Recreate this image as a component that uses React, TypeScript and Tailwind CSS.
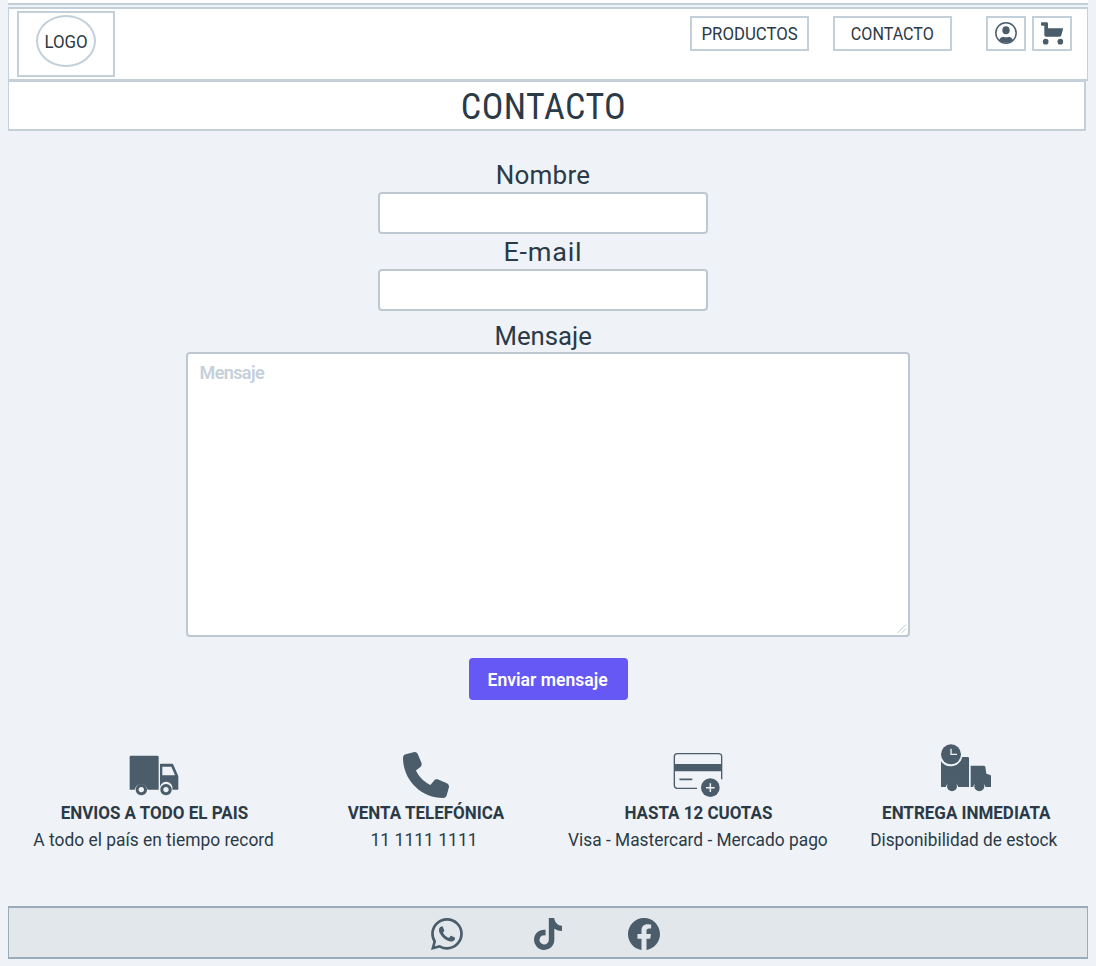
import { BsFacebook, BsWhatsapp } from "react-icons/bs";
import { FaPhone, FaTiktok } from "react-icons/fa6";

function UserIcon() {
  return (
    <svg width="22" height="22" viewBox="0 0 66 66" fill="currentColor" className="-mt-px">
      <circle cx="33" cy="33" r="30.5" fill="none" stroke="currentColor" strokeWidth="4.5" />
      <ellipse cx="33" cy="25" rx="11" ry="12" />
      <path d="M12 54Q16 45 24 44Q33 47 42 44Q50 45 54 54A30 30 0 0 1 12 54Z" />
    </svg>
  );
}

function CartIcon() {
  return (
    <svg width="24" height="24" viewBox="1110 62 72 72" fill="currentColor" className="-mt-px">
      <path d="M1116 66H1130Q1134 66 1134 70V84H1177Q1180 84 1179 87L1174 105Q1173 109 1169 109H1128Q1123 109 1123 104V76H1116Q1113 76 1113 73V69Q1113 66 1116 66Z" />
      <circle cx="1127" cy="124" r="8.5" />
      <circle cx="1171" cy="124" r="8.5" />
    </svg>
  );
}

function TruckIcon() {
  return (
    <svg width="52" height="42" viewBox="325 55 156 126" fill="currentColor">
      <path d="M333 60H413Q417 60 417 64V162H384A20 20 0 0 0 345 162H330V63Q330 60 333 60Z" />
      <path fillRule="evenodd" d="M422 84H457Q460 84 461 87L475 119Q476 121 476 124V160Q476 162 474 162H458A19 19 0 0 0 421 153V85ZM428 93V119H466L455 93Z" />
      <path fillRule="evenodd" d="M365 145a17 17 0 1 0 .1 0ZM365 154a8 8 0 1 1-.1 0Z" />
      <path fillRule="evenodd" d="M439 145a17 17 0 1 0 .1 0ZM439 154a8 8 0 1 1-.1 0Z" />
    </svg>
  );
}

function CardIcon() {
  return (
    <svg width="52" height="46" viewBox="337 50 156 138" fill="none" stroke="currentColor">
      <path d="M412 159H353Q344 159 344 150V64Q344 55 353 55H476Q486 55 486 64V132" strokeWidth="4" />
      <path d="M343 97H487" strokeWidth="22" />
      <path d="M361 132H396" strokeWidth="5" strokeLinecap="round" />
      <circle cx="452" cy="157" r="28" fill="currentColor" stroke="none" />
      <path d="M452 144V170M439 157H465" stroke="#eff3f7" strokeWidth="4.5" />
    </svg>
  );
}

function ExpressTruckIcon() {
  return (
    <svg width="52" height="50" viewBox="240 25 156 150" fill="currentColor">
      <path d="M243 80A36 36 0 0 0 307 67H323Q327 67 327 71V157H295A20 20 0 0 0 257 157H243Z" />
      <path d="M332 93H371Q375 93 376 97L379 117L391 121Q393 122 393 125V157H377A20 20 0 0 0 339 157H332Z" />
      <circle cx="273" cy="59" r="30" />
      <circle cx="276" cy="155" r="15" />
      <circle cx="358" cy="155" r="15" />
      <path d="M273 42V59H291" fill="none" stroke="#eff3f7" strokeWidth="4" />
    </svg>
  );
}

const navBox = "flex h-[35px] items-center justify-center border-2 border-[#c3cfd9] bg-white";
const label = "mr-[10px] text-[26px]";
const input = "mr-[10px] h-[42px] w-[330px] rounded-[4px] border-2 border-[#bdc8d2] bg-white";
const feature = "flex flex-col items-center whitespace-nowrap text-lg leading-[27px]";
const featureTitle = "scale-x-[0.943] font-bold";
const iconBox = "flex h-[60px] items-end justify-center text-[#4b5d6b]";

export default function App() {
  return (
    <div className="h-[966px] overflow-hidden bg-[#eff3f7] font-['Roboto',sans-serif] text-[#2b3a47]">
      <div className="ml-2 h-[5px] w-[1080px] border-b-2 border-[#c3cfd9] bg-white" />
      <header className="mt-[2px] ml-2 flex h-[74px] w-[1080px] items-start border-x border-y-2 border-[#c3cfd9] bg-white pl-2">
        <div className="mt-[2px] flex h-[66px] w-[98px] justify-center border-2 border-[#c3cfd9] pt-[2px]">
          <div className="flex h-[52px] w-[60px] items-center justify-center rounded-[50%] border-2 border-[#c3cfd9] pt-[2px] text-lg"><span className="scale-x-[0.938]">LOGO</span></div>
        </div>
        <nav className="mt-[7px] ml-auto flex pr-[15px] text-lg">
          <a className={`${navBox} mr-6 w-[119px]`}><span className="scale-x-[0.932]">PRODUCTOS</span></a>
          <a className={`${navBox} mr-[34px] w-[119px]`}><span className="scale-x-[0.895]">CONTACTO</span></a>
          <a className={`${navBox} mr-[6px] w-10 text-[#4b5d6b]`}><UserIcon /></a>
          <a className={`${navBox} w-10 text-[#4b5d6b]`}><CartIcon /></a>
        </nav>
      </header>
      <h1 className="ml-2 flex h-[50px] w-[1078px] items-center justify-center border-t border-r-2 border-b-2 border-l border-[#c3cfd9] bg-white pt-[3px] pr-[6px] font-['Roboto_Condensed','Roboto',sans-serif] text-4xl tracking-[0.5px]">CONTACTO</h1>

      <form className="flex flex-col items-center">
        <label htmlFor="name" className={`${label} mt-[27px] leading-[34px] tracking-[0.2px]`}>Nombre</label>
        <input id="name" className={input} />
        <label htmlFor="email" className={`${label} mt-px leading-[34px] scale-x-[1.04] tracking-[0.7px]`}>E-mail</label>
        <input id="email" className={input} />
        <label htmlFor="message" className={`${label} mt-[9px] scale-x-[0.99] leading-[32px]`}>Mensaje</label>
        <div className="relative h-[285px] w-[724px]">
          <textarea
            id="message"
            placeholder="Mensaje"
            className="block size-full resize-none rounded-[4px] border-2 border-[#bdc8d2] bg-white px-[11.5px] py-2 text-lg leading-[22px] font-semibold tracking-[-0.6px] placeholder:text-[#c5d0db]"
          />
          <svg width="10" height="10" className="absolute right-[3px] bottom-[3px]" stroke="#bdc8d2" strokeWidth="1">
            <path d="M0.5 9L9 0.5M4.5 9L9 4.5" />
          </svg>
        </div>
        <button type="button" className="mt-[21px] h-[42px] w-[159px] rounded-[4px] bg-[#6558f5] pt-[2px] text-lg font-semibold text-white"><span className="inline-block scale-x-[0.976]">Enviar mensaje</span></button>
      </form>

      <section className="mt-[39px] ml-[18px] grid grid-cols-[272px_272px_272px_264px]">
        <div className={feature}>
          <div className={`${iconBox} pb-[3px]`}><TruckIcon /></div>
          <h2 className={featureTitle}>ENVIOS A TODO EL PAIS</h2>
          <p className="scale-x-[0.965]">A todo el país en tiempo record</p>
        </div>
        <div className={feature}>
          <div className={`${iconBox} pb-px`}><FaPhone size={46} /></div>
          <h2 className={featureTitle}>VENTA TELEFÓNICA</h2>
          <p className="mr-1 scale-x-[0.972]">11 1111 1111</p>
        </div>
        <div className={feature}>
          <div className={`${iconBox} pb-px`}><CardIcon /></div>
          <h2 className={featureTitle}>HASTA 12 CUOTAS</h2>
          <p className="scale-x-[0.963]">Visa - Mastercard - Mercado pago</p>
        </div>
        <div className={feature}>
          <div className={`${iconBox} pb-[6px]`}><ExpressTruckIcon /></div>
          <h2 className={featureTitle}>ENTREGA INMEDIATA</h2>
          <p className="mr-1 scale-x-[0.957]">Disponibilidad de estock</p>
        </div>
      </section>

      <footer className="mt-[53px] ml-2 flex h-[53px] w-[1080px] items-center border-x border-y-2 border-[#9aacba] bg-[#e2e7eb] pt-[2px] pl-[422px] text-[#4b5d6b]">
        <BsWhatsapp size={32} />
        <FaTiktok size={32} className="ml-[69px]" />
        <BsFacebook size={32} className="ml-16" />
      </footer>
    </div>
  );
}
